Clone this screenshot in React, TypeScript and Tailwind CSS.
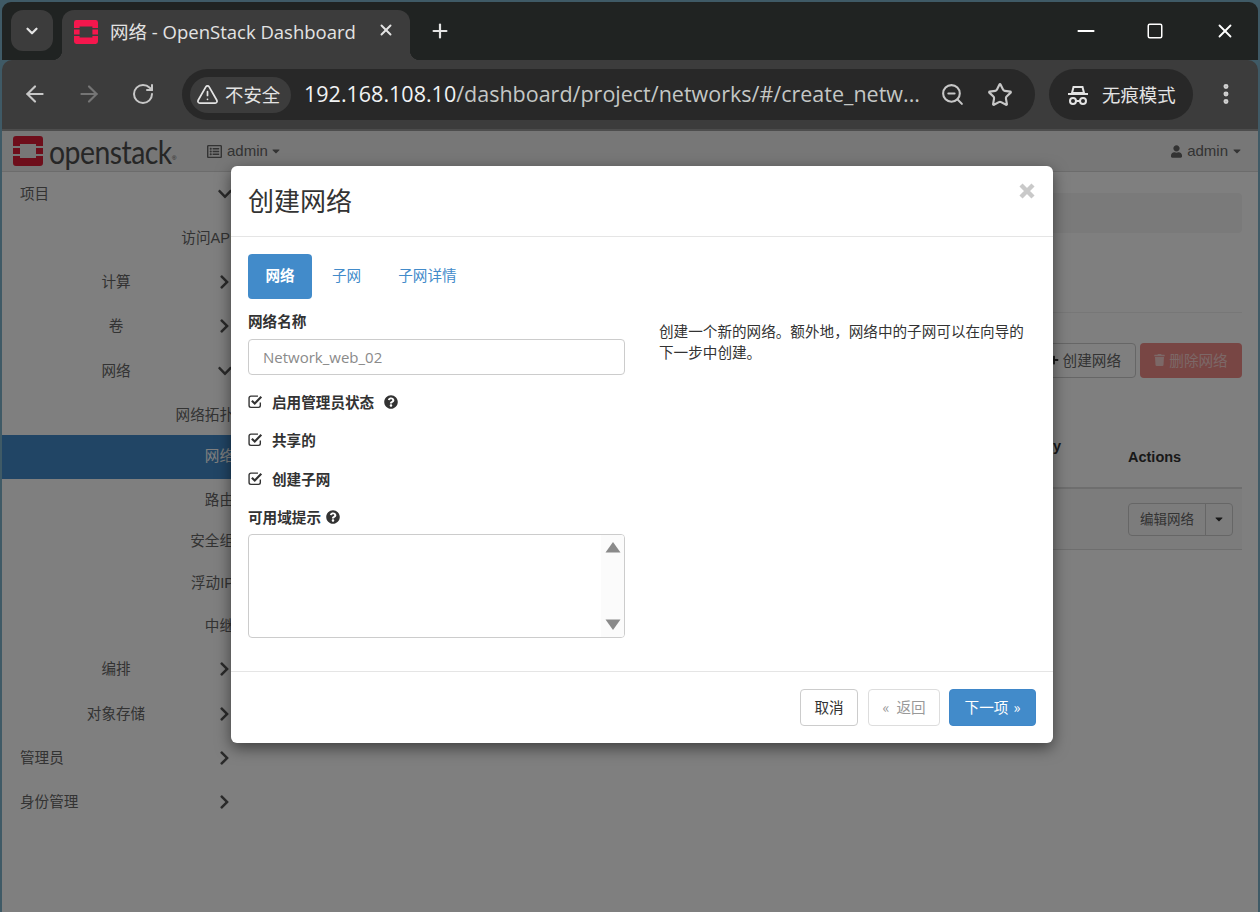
import {
  ArrowLeft,
  ArrowRight,
  ChevronDown,
  EllipsisVertical,
  Minus,
  Plus,
  RotateCw,
  Square,
  Star,
  TriangleAlert,
  X,
  ZoomOut,
} from "lucide-react";
import {
  FaCaretDown,
  FaChevronDown,
  FaChevronRight,
  FaPlus,
  FaQuestionCircle,
  FaRegListAlt,
  FaTrash,
  FaUser,
} from "react-icons/fa";

const cjk = "font-['Noto_Sans_CJK_SC','Noto_Sans',sans-serif]";

const sideRows = [
  { label: "项目", kind: "root", open: true, h: "h-[43px] pt-[2px]" },
  { label: "访问API", kind: "sub", h: "h-[44px] pt-[4px]" },
  { label: "计算", kind: "group", h: "h-[44px] pt-[4px]" },
  { label: "卷", kind: "group", h: "h-[44px] pt-[4px]" },
  { label: "网络", kind: "group", open: true, h: "h-[45px] pt-[4px]" },
  { label: "网络拓扑", kind: "sub", h: "h-[43px] pt-[4px]" },
  { label: "网络", kind: "active", h: "h-[44px] pb-[1px]" },
  { label: "路由", kind: "sub", h: "h-[39px] pt-[4px]" },
  { label: "安全组", kind: "sub", h: "h-[43px] pt-[4px]" },
  { label: "浮动IP", kind: "sub", h: "h-[42px] pt-[4px]" },
  { label: "中继", kind: "sub", h: "h-[43px] pt-[4px]" },
  { label: "编排", kind: "group", h: "h-[44px] pt-[4px]" },
  { label: "对象存储", kind: "group", h: "h-[45px] pt-[4px]" },
  { label: "管理员", kind: "root", h: "h-[44px] pt-[4px]" },
  { label: "身份管理", kind: "root", h: "h-[44px] pt-[4px]" },
];

function StackLogo({ className, color }: { className: string; color: string }) {
  return (
    <svg viewBox="0 0 30 30" className={className}>
      <path
        fill={color}
        fillRule="evenodd"
        d="M3 0H27Q30 0 30 3V10H23V8H7V10H0V3Q0 0 3 0ZM0 12H7V18H0ZM23 12H30V18H23ZM0 20H7V22H23V20H30V27Q30 30 27 30H3Q0 30 0 27Z"
      />
    </svg>
  );
}

function CheckIcon() {
  return (
    <svg viewBox="0 0 14 14" className="h-[15px] w-[15px] shrink-0 text-[#333]">
      <path
        d="M11.5 8v2.8a1.7 1.7 0 0 1-1.7 1.7H2.7A1.7 1.7 0 0 1 1 10.8V3.7A1.7 1.7 0 0 1 2.7 2h6.6"
        fill="none"
        stroke="currentColor"
        strokeWidth="1.3"
      />
      <path d="M3.6 6.2 6.3 8.9 12.4 2.6" fill="none" stroke="currentColor" strokeWidth="2" />
    </svg>
  );
}

function IncognitoIcon() {
  return (
    <svg viewBox="0 0 24 24" className="h-[24px] w-[24px] text-[#e3e3e3]" fill="none" stroke="currentColor" strokeWidth="2">
      <path d="M7.5 4h9l1.5 6H6z" />
      <path d="M2 11h20" />
      <circle cx="7" cy="18" r="3" />
      <circle cx="17" cy="18" r="3" />
      <path d="M10 18h4" />
    </svg>
  );
}

function Sidebar() {
  return (
    <div className="w-[232px] shrink-0 font-['Liberation_Sans','Noto_Sans_CJK_SC',sans-serif] text-[14.6px] text-[#666]">
      {sideRows.map((row, i) => {
        if (row.kind === "sub") {
          return (
            <div key={i} className={`${row.h} flex items-center justify-end`}>
              {row.label}
            </div>
          );
        }
        if (row.kind === "active") {
          return (
            <div key={i} className={`${row.h} flex w-[260px] items-center justify-end bg-[#428bca] pr-[28px] text-white`}>
              {row.label}
            </div>
          );
        }
        return (
          <div key={i} className={`${row.h} flex items-center`}>
            <span className={`w-[228px] ${row.kind === "root" ? "pl-[18px]" : "text-center"}`}>{row.label}</span>
            {row.open ? (
              <FaChevronDown className="mb-[2px] ml-[-12px] h-[16px] w-[14px] shrink-0 text-[#555]" />
            ) : (
              <FaChevronRight className="mb-[2px] ml-[-11px] h-[16px] w-[11px] shrink-0 text-[#555]" />
            )}
          </div>
        );
      })}
    </div>
  );
}

function PageBehind() {
  return (
    <div className="flex h-full flex-col bg-white">
      <div className="flex h-[41px] shrink-0 items-center border-b border-[#d8d8d8] bg-[#eeeeee] font-['Liberation_Sans',sans-serif] text-[15px] text-[#666]">
        <StackLogo className="ml-[11px] h-[30px] w-[30px]" color="#dc1d36" />
        <span className="ml-[6px] w-[123px] origin-left scale-x-[0.86] font-['Lato',sans-serif] text-[33px] leading-none tracking-[-0.6px] whitespace-nowrap text-[#4c4c4c]">
          openstack
        </span>
        <span className="mt-[13px] w-[6px] text-[6px] leading-none text-[#4c4c4c]">®</span>
        <FaRegListAlt className="ml-[29px] h-[15px] w-[15px]" />
        <span className="ml-[5px]">admin</span>
        <FaCaretDown className="ml-[3px] h-[12px] w-[10px]" />
        <div className="ml-auto flex items-center pr-[16px]">
          <FaUser className="h-[13px] w-[11px]" />
          <span className="ml-[5px]">admin</span>
          <FaCaretDown className="ml-[4px] h-[12px] w-[10px]" />
        </div>
      </div>
      <div className="flex flex-1">
        <Sidebar />
        <div className={`min-w-0 flex-1 pr-[16px] text-[14.6px] text-[#666] ${cjk}`}>
          <div className="mt-[21px] h-[40px] rounded-[4px] bg-[#f5f5f5]" />
          <div className="h-[80px] border-b border-[#eeeeee]" />
          <div className="mt-[30px] flex h-[35px] justify-end gap-[4px]">
            <div className="flex items-center gap-[4px] rounded-[4px] border border-[#cccccc] px-[14px] pb-[1px]">
              <FaPlus className="h-[10px] w-[10px] text-[#333]" />
              创建网络
            </div>
            <div className="flex w-[102px] items-center justify-center gap-[4px] rounded-[4px] bg-[#f08c88] pb-[1px] text-[#f8d0ce]">
              <FaTrash className="h-[12px] w-[11px]" />
              删除网络
            </div>
          </div>
          <div className="flex h-[111px] border-b-2 border-[#dddddd] font-['Liberation_Sans',sans-serif] text-[14.5px] font-bold text-[#333]">
            <span className="mt-[58px] ml-auto w-[78px] leading-[20px]">Availability Zones</span>
            <span className="mt-[69px] ml-[65px] w-[114px]">Actions</span>
          </div>
          <div className="flex h-[61px] items-center justify-end border-b border-[#dddddd] bg-[#f9f9f9] pr-[9px]">
            <div className="flex h-[33px] w-[78px] items-center justify-center rounded-l-[4px] border border-[#cccccc] pb-[1px] text-[13.5px]">编辑网络</div>
            <div className="ml-[-1px] flex h-[33px] w-[28px] items-center justify-center rounded-r-[4px] border border-[#cccccc] text-[#333]">
              <FaCaretDown className="h-[12px] w-[10px]" />
            </div>
          </div>
        </div>
      </div>
    </div>
  );
}

function CreateNetworkModal() {
  return (
    <div className={`absolute top-[35px] left-[229px] w-[822px] rounded-[6px] bg-white text-[14.6px] text-[#333] shadow-[0_5px_15px_rgba(0,0,0,0.5)] ${cjk}`}>
      <div className="flex h-[71px] items-center justify-between border-b border-[#e5e5e5] px-[18px] pl-[17px]">
        <h4 className="pb-[3px] text-[26px] leading-none text-[#333]">创建网络</h4>
        <svg viewBox="0 0 16 16" className="mb-[21px] h-[16px] w-[16px] text-[#c9c9c9]">
          <path d="M2 2 14 14M14 2 2 14" stroke="currentColor" strokeWidth="4.4" fill="none" />
        </svg>
      </div>

      <div className="px-[17px] pt-[17px] pb-[33px]">
        <div className="flex h-[45px] items-center">
          <span className="flex h-[45px] w-[64px] items-center justify-center rounded-[4px] bg-[#428bca] pb-[3px] font-bold text-white">网络</span>
          <span className="ml-[20px] pb-[3px] text-[#428bca]">子网</span>
          <span className="ml-[37px] pb-[3px] text-[#428bca]">子网详情</span>
        </div>

        <div className="flex">
          <div className="w-[377px] shrink-0">
            <label className="mt-[12px] block h-[21px] text-[14.6px] leading-[20px] font-bold">网络名称</label>
            <input
              className="mt-[7px] block h-[36px] w-full rounded-[4px] border border-[#cccccc] px-[14px] font-['Open_Sans',sans-serif] text-[15px] placeholder:text-[#8a8a8a]"
              placeholder="Network_web_02"
              readOnly
            />
            <div className="mt-[17px] flex h-[20px] items-center pb-[1px] font-bold">
              <CheckIcon />
              <span className="ml-[9px]">启用管理员状态</span>
              <FaQuestionCircle className="ml-[10px] h-[14px] w-[14px]" />
            </div>
            <div className="mt-[18px] flex h-[20px] items-center pb-[1px] font-bold">
              <CheckIcon />
              <span className="ml-[9px]">共享的</span>
            </div>
            <div className="mt-[19px] flex h-[20px] items-center pb-[1px] font-bold">
              <CheckIcon />
              <span className="ml-[9px]">创建子网</span>
            </div>
            <div className="mt-[19px] flex h-[20px] items-center pb-[2px] font-bold">
              可用域提示
              <FaQuestionCircle className="ml-[5px] h-[14px] w-[14px]" />
            </div>
            <div className="mt-[6px] flex h-[104px] overflow-hidden rounded-[4px] border border-[#cccccc]">
              <textarea className="flex-1 resize-none outline-none" readOnly />
              <div className="flex w-[23px] flex-col items-center justify-between bg-[#fbfbfb] py-[6px]">
                <svg viewBox="0 0 16 12" className="h-[12px] w-[16px] text-[#8a8a8a]">
                  <path d="M8 1 15.5 11.5H.5z" fill="currentColor" />
                </svg>
                <svg viewBox="0 0 16 12" className="h-[12px] w-[16px] text-[#8a8a8a]">
                  <path d="M.5.5h15L8 11z" fill="currentColor" />
                </svg>
              </div>
            </div>
          </div>
          <p className="mt-[21px] ml-[34px] w-[370px] leading-[21px]">
            创建一个新的网络。额外地，网络中的子网可以在向导的
            <br />
            下一步中创建。
          </p>
        </div>
      </div>

      <div className="flex h-[72px] items-start justify-end border-t border-[#e5e5e5] px-[17px] pt-[17px]">
        <div className="flex h-[37px] w-[58px] items-center justify-center rounded-[4px] border border-[#cccccc] pb-[2px]">取消</div>
        <div className="ml-[10px] flex h-[37px] w-[72px] items-center justify-center gap-[7px] rounded-[4px] border border-[#dddddd] pb-[2px] text-[#999999]">
          <span>«</span>
          <span>返回</span>
        </div>
        <div className="ml-[9px] flex h-[37px] w-[87px] items-center justify-center gap-[5px] rounded-[4px] border border-[#3f87c9] bg-[#428bca] pb-[2px] text-white">
          <span>下一项</span>
          <span>»</span>
        </div>
      </div>
    </div>
  );
}

export default function App() {
  return (
    <div className="h-[912px] w-[1260px] overflow-hidden bg-[#3f5a66] pt-[2px] pr-[2px] pl-[2px]">
      <div className="flex h-[910px] flex-col overflow-hidden rounded-t-[9px]">
        <div className={`flex h-[58px] shrink-0 bg-[#202322] text-[#e3e3e3] ${cjk}`}>
          <div className="mt-[8px] ml-[9px] flex h-[41px] w-[42px] items-center justify-center rounded-[12px] bg-[#3c3c3c]">
            <ChevronDown className="h-[18px] w-[18px]" strokeWidth={3} />
          </div>
          <div className="relative mt-[8px] ml-[9px] flex h-[50px] w-[348px] items-start rounded-t-[12px] bg-[#3c3c3c] pt-[10px] pl-[12px]">
            <span className="absolute bottom-0 left-[-10px] h-[10px] w-[10px] bg-[radial-gradient(circle_at_0_0,#202322_10px,#3c3c3c_10.5px)]" />
            <span className="absolute right-[-10px] bottom-0 h-[10px] w-[10px] bg-[radial-gradient(circle_at_100%_0,#202322_10px,#3c3c3c_10.5px)]" />
            <StackLogo className="h-[24px] w-[24px]" color="#f5174d" />
            <span className="ml-[12px] font-['Open_Sans','Noto_Sans_CJK_SC',sans-serif] text-[18.5px] leading-[24px] whitespace-nowrap">网络 - OpenStack Dashboard</span>
            <X className="absolute top-[11px] right-[15px] h-[18px] w-[18px]" strokeWidth={2.6} />
          </div>
          <Plus className="mt-[18px] ml-[19px] h-[22px] w-[22px]" strokeWidth={2.4} />
          <div className="ml-auto flex items-center pr-[22px] text-white">
            <Minus className="h-[26px] w-[26px]" strokeWidth={1.8} />
            <Square className="ml-[47px] h-[18px] w-[18px]" strokeWidth={2} />
            <X className="ml-[50px] h-[22px] w-[22px]" strokeWidth={2} />
          </div>
        </div>

        <div className={`flex h-[71px] shrink-0 items-start rounded-t-[10px] border-b-2 border-[#4d4d4d] bg-[#3c3c3c] pt-[9px] text-[#c7c7c7] ${cjk}`}>
          <ArrowLeft className="mt-[12px] ml-[20px] h-[26px] w-[26px]" strokeWidth={2} />
          <ArrowRight className="mt-[12px] ml-[28px] h-[26px] w-[26px] text-[#757575]" strokeWidth={2} />
          <RotateCw className="mt-[13px] ml-[29px] h-[24px] w-[24px]" strokeWidth={2} />
          <div className="ml-[27px] flex h-[51px] w-[853px] items-center rounded-full bg-[#282828] pl-[8px]">
            <div className="flex h-[36px] w-[101px] shrink-0 items-center rounded-full bg-[#3c3c3c] pl-[6px] text-[18.4px] text-[#e3e3e3]">
              <TriangleAlert className="h-[23px] w-[23px]" strokeWidth={1.8} />
              <span className="ml-[6px] whitespace-nowrap">不安全</span>
            </div>
            <div className="ml-[13px] w-[615px] shrink-0 font-['Open_Sans',sans-serif] text-[21.5px] whitespace-nowrap text-[#c4c7c5]">
              <span className="text-[#f1f3f4]">192.168.108.10</span>/dashboard/project/networks/#/create_netw...
            </div>
            <ZoomOut className="ml-[21px] h-[25px] w-[25px]" strokeWidth={2} />
            <Star className="ml-[22px] h-[26px] w-[26px]" strokeWidth={2} />
          </div>
          <div className="ml-[14px] flex h-[51px] w-[144px] items-center rounded-full bg-[#282828] pl-[17px] text-[18.4px] text-[#e3e3e3]">
            <IncognitoIcon />
            <span className="ml-[12px] whitespace-nowrap">无痕模式</span>
          </div>
          <EllipsisVertical className="mt-[12px] ml-[20px] h-[26px] w-[26px] text-[#d0d0d0]" strokeWidth={2.6} />
        </div>

        <div className="relative min-h-0 flex-1 overflow-hidden">
          <PageBehind />
          <div className="absolute inset-0 bg-black/50" />
          <CreateNetworkModal />
        </div>
      </div>
    </div>
  );
}
